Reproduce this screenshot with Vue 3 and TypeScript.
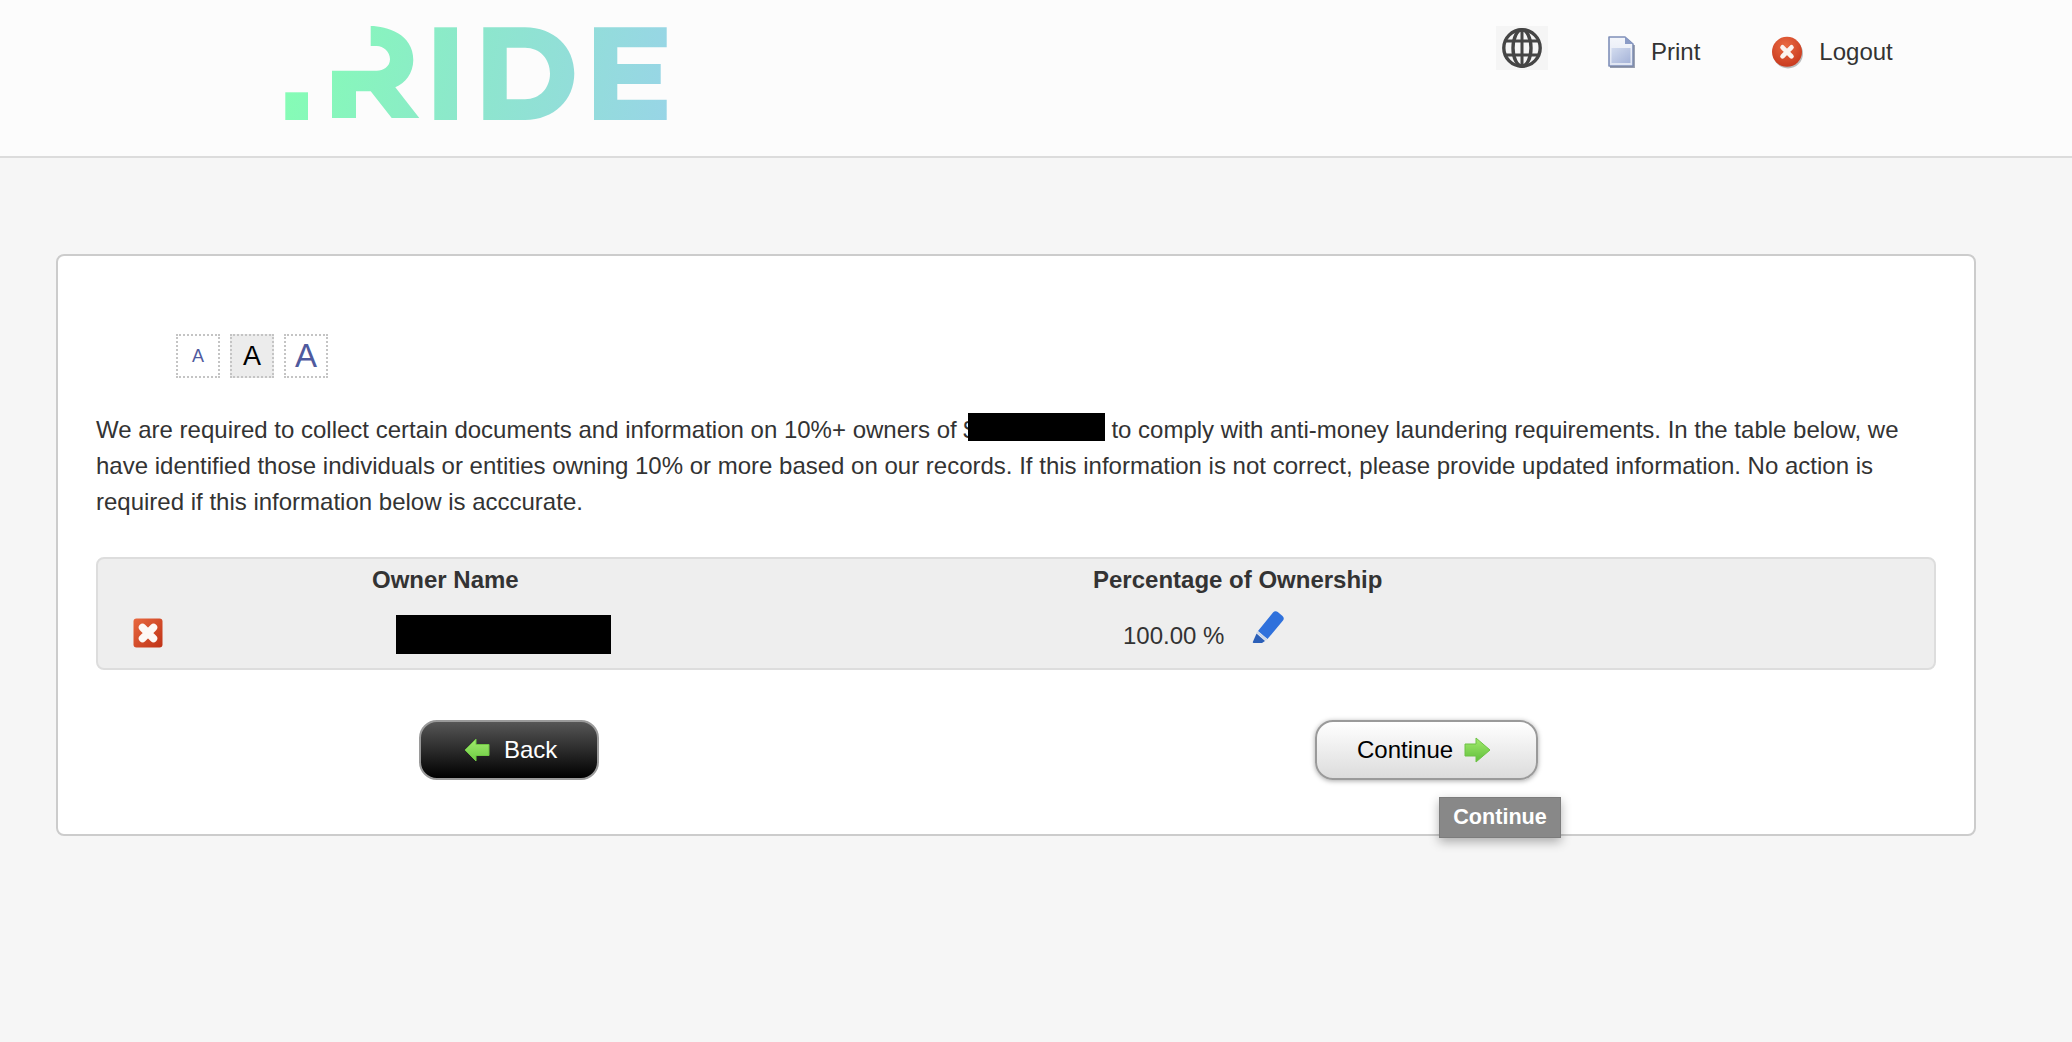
<script setup lang="ts">
import { ref } from 'vue'

const sizes = ref([
  { label: 'A', cls: 'small' },
  { label: 'A', cls: 'medium' },
  { label: 'A', cls: 'large' },
])
</script>

<template>
  <div class="page">
    <header class="top">
      <svg class="logo" width="382" height="94" viewBox="0 0 382 94" role="img" aria-label=".RIDE">
        <defs>
          <linearGradient id="rideFill" gradientUnits="userSpaceOnUse" x1="0" y1="30" x2="382" y2="94">
            <stop offset="0" stop-color="#85fdb5" />
            <stop offset="0.5" stop-color="#8de6cd" />
            <stop offset="1" stop-color="#98d5e6" />
          </linearGradient>
        </defs>
        <g fill="url(#rideFill)">
          <rect x="0.3" y="66.3" width="22.7" height="27.7" />
          <path d="M85.7 0C101.7 0 128.3 8 128.3 34C128.3 47.3 120 57.3 110.3 61.3L134.3 92H106.7L85.7 65.3H71V92H47V44.7H91.7C98.3 44.7 105 40.7 105 33.3C105 25.7 98.3 20 91.7 20H85.7Z" />
          <rect x="149.3" y="1.3" width="22.7" height="92.7" />
          <path fill-rule="evenodd" d="M198.3 1.3H240C269 1.3 289.3 21 289.3 47.6C289.3 74 269 94 240 94H198.3ZM221.7 21.7V73.3H240C255 73.3 265 62 265 47.6C265 33 255 21.7 240 21.7Z" />
          <path d="M309 1.3H381.7V21.3H332.3V38H375.7V58H332.3V73.7H381.7V94H309Z" />
        </g>
      </svg>

      <nav class="top-nav">
        <span class="globe-box">
          <svg class="soft" width="42" height="42" viewBox="0 0 42 42">
            <g fill="none" stroke="#454545" stroke-width="3.4">
              <circle cx="21" cy="21" r="18.2" />
              <ellipse cx="21" cy="21" rx="9" ry="18.2" />
              <path d="M21 2.5V39.5M3.5 14H38.5M3.5 28H38.5" stroke-width="3" />
            </g>
          </svg>
        </span>
        <a class="nav-link print-link">
          <svg class="soft" width="28" height="32" viewBox="0 0 28 32">
            <defs>
              <linearGradient id="sheet" x1="0" y1="0" x2="0" y2="1">
                <stop offset="0" stop-color="#f4f6fb" />
                <stop offset="1" stop-color="#dfe5f2" />
              </linearGradient>
              <linearGradient id="band" x1="0" y1="0" x2="1" y2="1">
                <stop offset="0" stop-color="#d3dcef" />
                <stop offset="1" stop-color="#a5b3d8" />
              </linearGradient>
            </defs>
            <path d="M2 1H18L26 8V30H2Z" fill="url(#sheet)" stroke="#7f8fb8" stroke-width="1.6" stroke-linejoin="round" />
            <path d="M18 1V8H26Z" fill="#8a9bc6" />
            <rect x="4.5" y="12" width="19" height="15" fill="url(#band)" />
            <path d="M3 31H27V9" fill="none" stroke="#79839b" stroke-width="1.8" opacity=".8" />
          </svg>
          <span>Print</span>
        </a>
        <a class="nav-link logout-link">
          <svg class="soft" width="33" height="33" viewBox="0 0 33 33">
            <defs>
              <radialGradient id="redBall" cx="0.45" cy="0.3" r="0.8">
                <stop offset="0" stop-color="#ea6a42" />
                <stop offset="1" stop-color="#c4341a" />
              </radialGradient>
            </defs>
            <circle cx="17" cy="17.5" r="15" fill="#8f8f8f" opacity=".6" />
            <circle cx="16" cy="15.8" r="15" fill="url(#redBall)" />
            <path d="M11.5 11.3L20.5 20.3M20.5 11.3L11.5 20.3" stroke="#fbf4f0" stroke-width="4.6" stroke-linecap="round" />
          </svg>
          <span>Logout</span>
        </a>
      </nav>
    </header>

    <main class="card">
      <div class="text-sizes">
        <span v-for="s in sizes" :key="s.cls" class="size-btn" :class="s.cls">{{ s.label }}</span>
      </div>

      <p class="intro">
        We are required to collect certain documents and information on 10%+ owners of $<span class="redact inline-redact"></span> to comply with anti-money laundering requirements. In the table below, we have identified those individuals or entities owning 10% or more based on our records. If this information is not correct, please provide updated information. No action is required if this information below is acccurate.
      </p>

      <div class="owners">
        <span></span>
        <span class="owner-head">Owner Name</span>
        <span class="owner-head">Percentage of Ownership</span>

        <svg class="remove-icon soft" width="30" height="30" viewBox="0 0 30 30">
          <defs>
            <linearGradient id="redBox" x1="0" y1="0" x2="1" y2="1">
              <stop offset="0" stop-color="#e8683f" />
              <stop offset="1" stop-color="#bf3216" />
            </linearGradient>
          </defs>
          <rect x="0.5" y="0.5" width="29" height="29" rx="3" fill="url(#redBox)" />
          <path d="M9.5 9.5L20.5 20.5M20.5 9.5L9.5 20.5" stroke="#fdf8f6" stroke-width="7.5" stroke-linecap="round" />
        </svg>
        <span class="redact name-redact"></span>
        <span class="pct">
          <span>100.00 %</span>
          <svg class="pencil soft" width="34" height="36" viewBox="0 0 34 36">
            <path d="M7 22L22 3.5C23.3 2 25.3 1.8 26.8 3L31.5 7C33 8.2 33.2 10.2 32 11.6L16.5 30Z" fill="#2f71dc" />
            <path d="M5.5 24.5L14 32L11 34H2.5C2 34 1.7 33.6 1.8 33.1Z" fill="#2b5fb8" />
            <path d="M6 23L15.5 31" stroke="#c9d6ea" stroke-width="1.8" />
          </svg>
        </span>
      </div>

      <div class="actions">
        <button class="btn btn-back">
          <svg class="soft" width="26" height="24" viewBox="0 0 26 24">
            <defs>
              <linearGradient id="arrowBack" x1="0" y1="0" x2="0" y2="1">
                <stop offset="0" stop-color="#a3ea6e" />
                <stop offset="1" stop-color="#6ccb43" />
              </linearGradient>
            </defs>
            <path d="M1 12L12 1V6.5H25V17.5H12V23Z" fill="url(#arrowBack)" stroke="#6fc743" stroke-width="1" stroke-linejoin="round" />
          </svg>
          <span>Back</span>
        </button>
        <div class="continue-wrap">
          <button class="btn btn-continue">
            <span>Continue</span>
            <svg class="soft" width="28" height="26" viewBox="0 0 28 26">
              <defs>
                <linearGradient id="arrowNext" x1="0" y1="0" x2="0" y2="1">
                  <stop offset="0" stop-color="#a3ea6e" />
                  <stop offset="1" stop-color="#5fbf3a" />
                </linearGradient>
              </defs>
              <path d="M26 13L12 1V7H1V19H12V25Z" fill="url(#arrowNext)" stroke="#6cc244" stroke-width="1" stroke-linejoin="round" />
            </svg>
          </button>
          <span class="tooltip">Continue</span>
        </div>
      </div>
    </main>
  </div>
</template>

<style>
html,
body {
  margin: 0;
  background: #f6f6f6;
}
</style>

<style scoped>
.page {
  min-height: 1042px;
  background: #f6f6f6;
  font-family: "Liberation Sans", Arial, sans-serif;
  font-size: 24px;
  color: #333;
}

.soft {
  filter: blur(0.5px);
  flex: none;
}

.top {
  height: 156px;
  display: flex;
  background: #fcfcfc;
  border-bottom: 2px solid #dcdcdc;
}

.logo {
  margin: 26px 0 0 285px;
}

.top-nav {
  display: flex;
  align-items: flex-start;
  margin-left: 829px;
}

.globe-box {
  width: 52px;
  height: 44px;
  margin-top: 26px;
  background: #f5f5f5;
  display: flex;
  align-items: center;
  justify-content: center;
}

.nav-link {
  display: flex;
  align-items: center;
  gap: 16px;
  margin-top: 36px;
  height: 32px;
  color: #333;
}

.print-link {
  margin-left: 59px;
}

.logout-link {
  margin-left: 71px;
  gap: 15px;
}

.card {
  width: 1840px;
  height: 500px;
  margin: 96px 0 0 56px;
  padding: 78px 38px 0;
  background: #fff;
  border: 2px solid #ccc;
  border-radius: 8px;
}

.text-sizes {
  display: flex;
  gap: 10px;
  margin-left: 80px;
}

.size-btn {
  width: 40px;
  height: 40px;
  border: 2px dotted #c4c4c4;
  display: flex;
  align-items: center;
  justify-content: center;
  color: #4f5a9e;
  background: #fff;
}

.size-btn.small {
  font-size: 18px;
}

.size-btn.medium {
  font-size: 27px;
  color: #000;
  background: #ececec;
}

.size-btn.large {
  font-size: 33px;
}

.intro {
  margin: 34px 0 0;
  line-height: 36px;
  color: #333;
}

.redact {
  display: block;
  background: #000;
}

.inline-redact {
  display: inline-block;
  width: 137px;
  height: 28px;
  margin-left: -9px;
  vertical-align: -3px;
  position: relative;
}

.owners {
  margin-top: 37px;
  height: 109px;
  background: #eee;
  border: 2px solid #ddd;
  border-radius: 8px;
  display: grid;
  grid-template-columns: 239px 721px 1fr;
  grid-template-rows: 41px 1fr;
  padding-left: 35px;
  align-items: center;
}

.owner-head {
  font-weight: 700;
  color: #333;
}

.remove-icon {
  align-self: start;
  margin-top: 18px;
}

.name-redact {
  width: 215px;
  height: 39px;
  margin-left: 24px;
  align-self: start;
  margin-top: 15px;
}

.pct {
  display: flex;
  align-items: flex-start;
  gap: 27px;
  padding-left: 30px;
  align-self: start;
  height: 40px;
}

.pct > span {
  margin-top: 22px;
}

.pencil {
  margin-top: 9px;
}

.actions {
  display: flex;
  margin: 50px 0 0 323px;
}

.btn {
  height: 60px;
  box-sizing: border-box;
  border-radius: 18px;
  font: inherit;
  display: flex;
  align-items: center;
  padding: 0;
}

.btn-back {
  width: 180px;
  padding-left: 43px;
  gap: 14px;
  color: #fff;
  border: 2px solid #9a9a9a;
  background: linear-gradient(#565656, #000);
}

.continue-wrap {
  position: relative;
  margin-left: 716px;
}

.btn-continue {
  width: 223px;
  padding-left: 40px;
  gap: 11px;
  color: #000;
  border: 2px solid #9a9a9a;
  background: linear-gradient(#fff, #dcdcdc);
  box-shadow: 0 1px 5px rgba(0, 0, 0, .35);
}

.tooltip {
  position: absolute;
  left: 124px;
  top: 77px;
  width: 122px;
  height: 41px;
  padding-bottom: 2px;
  display: flex;
  align-items: center;
  justify-content: center;
  background: #888;
  border: 1px solid #7c7c7c;
  box-sizing: border-box;
  color: #fff;
  font-size: 21.6px;
  font-weight: 700;
  box-shadow: 0 4px 10px rgba(0, 0, 0, .3);
}
</style>
